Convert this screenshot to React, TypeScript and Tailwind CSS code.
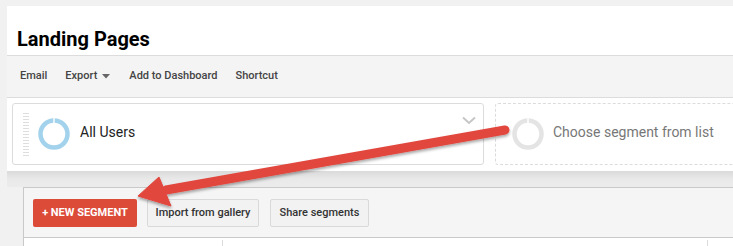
import React from "react"

function Donut({ color, gap }: { color: string; gap: string }) {
  return (
    <svg width="32" height="32" viewBox="0 0 32 32" className="shrink-0">
      <circle cx="16" cy="16" r="13.5" fill="none" stroke={color} strokeWidth="4.5" />
      <rect x="15.3" y="0" width="1.4" height="6" fill={gap} />
    </svg>
  )
}

function Arrow() {
  return (
    <svg className="absolute inset-0 pointer-events-none" width="733" height="246" viewBox="0 0 733 246">
      <defs>
        <filter id="sh" x="-10%" y="-50%" width="120%" height="200%">
          <feDropShadow dx="0" dy="2" stdDeviation="1.6" floodColor="#000" floodOpacity="0.35" />
        </filter>
      </defs>
      <g filter="url(#sh)" fill="#e2463d" stroke="#e2463d">
        <line x1="505" y1="130" x2="166" y2="190" strokeWidth="9" strokeLinecap="round" />
        <polygon points="138,196 159,177 171,206" strokeWidth="1" strokeLinejoin="round" />
      </g>
    </svg>
  )
}

export default function App() {
  return (
    <div className="relative w-[733px] h-[246px] overflow-hidden bg-[#f1f1f1] font-['Roboto','Liberation_Sans',sans-serif]">
      <div className="pl-[7px] pt-[6px]">
        {/* title */}
        <div className="bg-white border-b border-[#dcdcdc] pl-[10px] pt-[21px] pb-[4px]">
          <h1 className="text-[20px] leading-[24px] font-bold text-black">Landing Pages</h1>
        </div>

        {/* toolbar */}
        <div className="h-[42px] bg-[#f4f4f4] border-b border-[#dcdcdc] pl-[13px] flex items-center text-[11px] font-medium text-[#444]">
          <span>Email</span>
          <span className="ml-[18px] flex items-center gap-[5px]">
            Export
            <svg width="8" height="5" viewBox="0 0 8 5">
              <path d="M0 0h8L4 4.5z" fill="#666" />
            </svg>
          </span>
          <span className="ml-[19px]">Add to Dashboard</span>
          <span className="ml-[18px]">Shortcut</span>
        </div>

        {/* segments */}
        <div className="bg-white pl-[5px] pt-[5px] pb-[6px] flex gap-[11px]">
          <div className="w-[472px] h-[62px] shrink-0 rounded-[3px] border border-[#dcdcdc] flex items-center pl-[10px] relative">
            <div className="flex flex-col gap-[2px] w-[6px] mr-[9px]">
              {Array.from({ length: 15 }).map((_, i) => (
                <div key={i} className="h-px bg-[#dedede]" />
              ))}
            </div>
            <Donut color="#a2d2ec" gap="#ffffff" />
            <span className="ml-[10px] mb-[3px] text-[14px] text-[#222]">All Users</span>
            <svg className="absolute right-[7px] top-[12px]" width="14" height="9" viewBox="0 0 14 9">
              <path d="M1 1.5l6 5.5 6-5.5" fill="none" stroke="#c6c6c6" strokeWidth="2" />
            </svg>
          </div>
          <div className="w-[300px] h-[62px] shrink-0 rounded-[3px] border border-dashed border-[#dcdcdc] flex items-center pl-[16px]">
            <Donut color="#e4e4e4" gap="#ffffff" />
            <span className="ml-[9px] mb-[3px] text-[14px] text-[#777]">Choose segment from list</span>
          </div>
        </div>

        {/* shaded band */}
        <div className="h-[16px] bg-gradient-to-b from-[#dadada] via-[#e9e9e9] to-[#ececec]" />

        {/* segment panel */}
        <div className="ml-[16px] border-t border-l border-b border-[#c9c9c9] bg-[#f5f5f5] pl-[9px] pt-[11px] pb-[10px] flex gap-[10px]">
          <button className="w-[104px] h-[28px] rounded-[2px] bg-[#dc4a38] text-white text-[11px] font-bold uppercase">
            + New Segment
          </button>
          <button className="w-[112px] h-[28px] rounded-[2px] bg-[#f2f2f2] border border-[#d9d9d9] text-[11px] font-medium text-[#333]">
            Import from gallery
          </button>
          <button className="ml-px w-[99px] h-[28px] rounded-[2px] bg-[#f2f2f2] border border-[#d9d9d9] text-[11px] font-medium text-[#333]">
            Share segments
          </button>
        </div>

        {/* table header */}
        <div className="ml-[16px] h-[20px] bg-white border-l border-[#c9c9c9] flex">
          <div className="w-[199px] border-r border-[#dcdcdc] mt-[2px]" />
          <div className="w-[485px] border-r border-[#dcdcdc] mt-[2px]" />
        </div>
      </div>
      <Arrow />
    </div>
  )
}
